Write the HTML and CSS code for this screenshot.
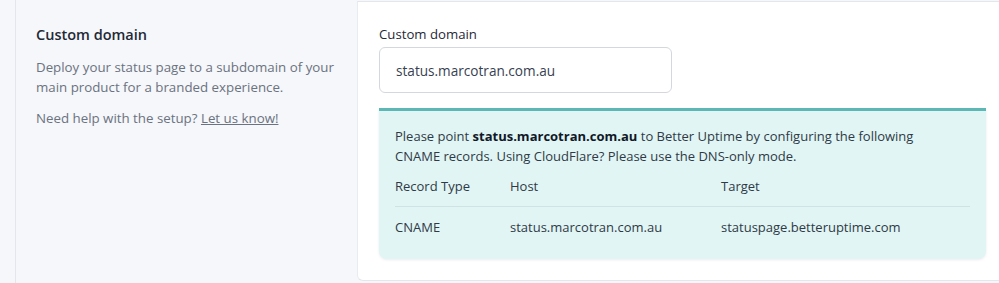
FILE: index.html
```html
<!DOCTYPE html>
<html lang="en">
<head>
    <meta charset="UTF-8">
    <title>Custom domain</title>
    <link rel="stylesheet" href="styles.css">
</head>
<body>
    <div class="page">
        <div class="section">
            <div class="intro">
                <h2 class="intro-title">Custom domain</h2>
                <p class="intro-text">Deploy your status page to a subdomain of your main product for a branded experience.</p>
                <p class="intro-text">Need help with the setup? <a href="#">Let us know!</a></p>
            </div>
            <div class="card">
                <label class="field-label" for="domain">Custom domain</label>
                <input class="field-input" id="domain" type="text" value="status.marcotran.com.au">
                <div class="notice">
                    <p class="notice-text">Please point <b>status.marcotran.com.au</b> to Better Uptime by configuring the following CNAME records. Using CloudFlare? Please use the DNS-only mode.</p>
                    <div class="records">
                        <div class="records-row records-head">
                            <span>Record Type</span>
                            <span>Host</span>
                            <span>Target</span>
                        </div>
                        <div class="records-row">
                            <span>CNAME</span>
                            <span>status.marcotran.com.au</span>
                            <span>statuspage.betteruptime.com</span>
                        </div>
                    </div>
                </div>
            </div>
        </div>
    </div>
</body>
</html>
```

FILE: styles.css
```css
body{
    margin: 0;
    background: #f5f7fa;
    font-family: "Open Sans", "Noto Sans", sans-serif;
    color: #374151;
}
.page{
    margin-left: 15px;
    border-left: 1px solid #e3e6ea;
    height: 283px;
}
.section{
    display: grid;
    grid-template-columns: 341px 650px;
    padding-top: 1px;
}
.intro{
    padding: 24px 20px 0 20px;
}
.intro-title{
    margin: 0 0 14px 0;
    font-size: 14.5px;
    font-weight: 600;
    color: #1f2937;
}
.intro-text{
    margin: 0 0 12px 0;
    font-size: 13.3px;
    line-height: 19.5px;
    color: #6b7280;
}
.intro-text a{
    color: #6b7280;
}
.card{
    background: #fff;
    border-top: 1px solid #e3e6ea;
    border-left: 1px solid #e8ebef;
    border-bottom: 1px solid #e3e6ea;
    border-bottom-left-radius: 6px;
    padding: 23px 20px 19px 21px;
    height: 236px;
}
.field-label{
    display: block;
    font-size: 13.2px;
    line-height: 18px;
    color: #1f2937;
    margin-bottom: 4px;
}
.field-input{
    display: block;
    box-sizing: border-box;
    width: 293px;
    height: 46px;
    padding: 0 16px;
    border: 1px solid #d4d7dc;
    border-radius: 6px;
    font-family: inherit;
    font-size: 13.6px;
    color: #374151;
    outline: none;
}
.notice{
    margin-top: 15px;
    width: 607px;
    box-sizing: border-box;
    background: #e1f5f5;
    border-top: 3px solid #5cb8b4;
    border-radius: 0 0 8px 8px;
    box-shadow: 0 1px 3px rgba(0,0,0,0.08);
    padding: 15px 16px 12px 16px;
    font-size: 13px;
    line-height: 20px;
    color: #2f3a45;
}
.notice-text{
    margin: 0;
    max-width: 530px;
}
.notice-text b{
    color: #111827;
}
.records{
    margin-top: 10px;
}
.records-row{
    display: grid;
    grid-template-columns: 115px 211px 1fr;
    padding: 0 0 10px 0;
}
.records-head{
    border-bottom: 1px solid #cfe3e4;
    margin-bottom: 10px;
}
```
